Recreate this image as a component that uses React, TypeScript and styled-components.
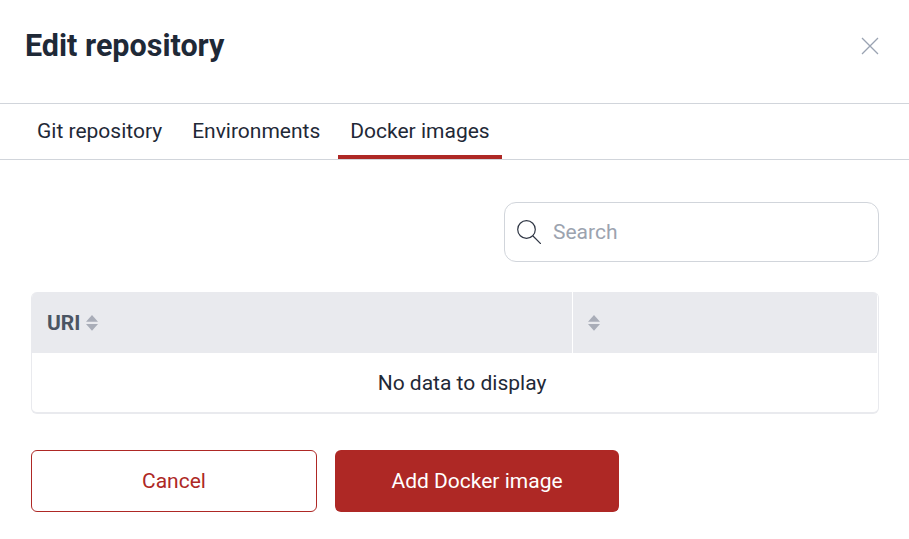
import styled, { createGlobalStyle } from "styled-components";

const GlobalStyle = createGlobalStyle`
  html, body {
    margin: 0;
    padding: 0;
    background: #fff;
    font-family: Roboto, "Liberation Sans", sans-serif;
  }
`;

function SortIcon() {
  return (
    <SortSvg width="12" height="16" viewBox="0 0 12 16">
      <path d="M6 0 L12 6.8 H0 Z" fill="#a9adb8" />
      <path d="M0 9 H12 L6 15.8 Z" fill="#a9adb8" />
    </SortSvg>
  );
}

export default function App() {
  return (
    <Modal>
      <GlobalStyle />
      <Header>
        <Title>Edit repository</Title>
        <CloseButton aria-label="Close">
          <svg width="18" height="18" viewBox="0 0 18 18" fill="none" stroke="#9aa3b2" strokeWidth="1.3">
            <path d="M1 1 L17 17 M17 1 L1 17" />
          </svg>
        </CloseButton>
      </Header>
      <Tabs>
        <Tab>Git repository</Tab>
        <Tab>Environments</Tab>
        <Tab $active>Docker images</Tab>
      </Tabs>
      <Body>
        <SearchRow>
          <SearchBox>
            <svg width="24" height="24" viewBox="0 0 24 24" fill="none" stroke="#2f3644" strokeWidth="1.2">
              <circle cx="9.5" cy="9.5" r="8.8" />
              <path d="M16 16 L24 24" />
            </svg>
            <SearchInput placeholder="Search" />
          </SearchBox>
        </SearchRow>
        <Table>
          <HeadRow>
            <HeadCell>URI <SortIcon /></HeadCell>
            <HeadCell><SortIcon /></HeadCell>
          </HeadRow>
          <EmptyRow>No data to display</EmptyRow>
        </Table>
        <Actions>
          <OutlineButton>Cancel</OutlineButton>
          <PrimaryButton>Add Docker image</PrimaryButton>
        </Actions>
      </Body>
    </Modal>
  );
}

const Modal = styled.div`
  width: 909px;
  height: 539px;
  overflow: hidden;
  background: #fff;
`;

const Header = styled.div`
  height: 104px;
  box-sizing: border-box;
  padding: 0 30px 12px 25px;
  display: flex;
  align-items: center;
  justify-content: space-between;
  border-bottom: 1px solid #d1d5db;
`;

const Title = styled.h2`
  margin: 0;
  font-size: 30.5px;
  line-height: 36px;
  font-weight: 700;
  color: #1f2937;
`;

const CloseButton = styled.button`
  display: flex;
  padding: 0;
  border: none;
  background: none;
`;

const Tabs = styled.div`
  height: 56px;
  box-sizing: border-box;
  padding-left: 25px;
  display: flex;
  border-bottom: 1px solid #d1d5db;
`;

const Tab = styled.div<{ $active?: boolean }>`
  padding: 2px 12px 0;
  margin-right: 6px;
  height: 55px;
  box-sizing: border-box;
  display: flex;
  align-items: center;
  font-size: 21px;
  color: #1f2937;
  border-bottom: 4px solid ${(p) => (p.$active ? "#ae2825" : "transparent")};
`;

const Body = styled.div`
  padding: 42px 30px 0 31px;
`;

const SearchRow = styled.div`
  display: flex;
  justify-content: flex-end;
`;

const SearchBox = styled.div`
  width: 375px;
  height: 60px;
  box-sizing: border-box;
  padding: 0 12px;
  display: flex;
  align-items: center;
  gap: 12px;
  border: 1px solid #d1d5db;
  border-radius: 12px;
`;

const SearchInput = styled.input`
  flex: 1;
  min-width: 0;
  border: none;
  outline: none;
  padding: 0;
  font-family: inherit;
  font-size: 21px;
  color: #1f2937;

  &::placeholder {
    color: #9ca3af;
    opacity: 1;
  }
`;

const Table = styled.div`
  margin-top: 30px;
  border: 1px solid #e9eaee;
  border-top: none;
  border-bottom-width: 2px;
  border-radius: 6px;
  overflow: hidden;
`;

const HeadRow = styled.div`
  height: 61px;
  display: grid;
  grid-template-columns: 540px 1fr;
  background: #e9eaee;
  border-right: 1px solid #fff;
`;

const HeadCell = styled.div`
  padding-left: 15px;
  display: flex;
  align-items: center;
  gap: 6px;
  font-size: 21px;
  font-weight: 700;
  color: #4b5563;

  & + & {
    border-left: 1px solid #fff;
  }
`;

const SortSvg = styled.svg`
  flex: none;
`;

const EmptyRow = styled.div`
  height: 59px;
  padding-left: 14px;
  display: flex;
  align-items: center;
  justify-content: center;
  font-size: 21px;
  color: #1f2937;
`;

const Actions = styled.div`
  margin-top: 36px;
  display: flex;
  gap: 18px;
`;

const OutlineButton = styled.button`
  width: 286px;
  height: 62px;
  border: 1px solid #ae2825;
  border-radius: 6px;
  background: #fff;
  font-family: inherit;
  font-size: 21px;
  color: #ae2825;
`;

const PrimaryButton = styled.button`
  width: 284px;
  height: 62px;
  border: none;
  border-radius: 6px;
  background: #ae2825;
  font-family: inherit;
  font-size: 21px;
  font-weight: 400;
  color: #fff;
`;
